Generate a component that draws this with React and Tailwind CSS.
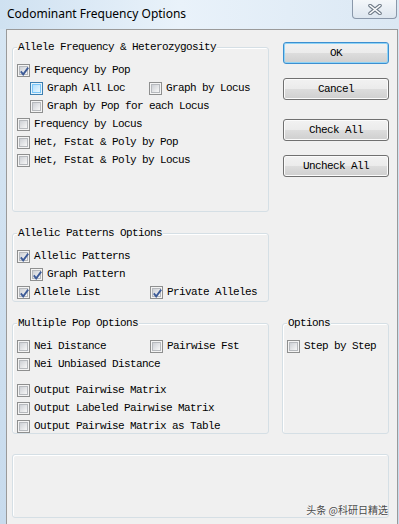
import React from "react";

const Box = ({ checked, hover }) => (
  <span
    className={`relative flex size-[13px] shrink-0 border p-px ${
      hover ? "border-[#3c7fb1] bg-[#e5f3fb]" : "border-[#8e8f8f] bg-[#f4f4f4]"
    }`}
  >
    <span
      className={`size-full border ${
        hover
          ? "border-[#79c6f9] bg-[linear-gradient(135deg,#b1dffd,#e9f7fe)]"
          : "border-[#b6b9bd] bg-[linear-gradient(135deg,#cdd0d5,#f7f7f7)]"
      }`}
    />
    {checked && (
      <svg className="absolute inset-0" width="13" height="13" viewBox="0 0 13 13">
        <path d="M2.8 6.4 L5.2 9.4 L10.2 2.6" fill="none" stroke="#3d5b97" strokeWidth="1.8" />
      </svg>
    )}
  </span>
);

const Check = ({ label, checked, hover, className = "" }) => (
  <div className={`flex h-[18px] items-center gap-[4px] ${className}`}>
    <Box checked={checked} hover={hover} />
    <span className="whitespace-pre">{label}</span>
  </div>
);

const Group = ({ title, className = "", children }) => (
  <div
    className={`relative rounded-[3px] border border-[#d5dfe5] pl-[4px] pt-[13px] shadow-[inset_1px_1px_0_#ffffff] ${className}`}
  >
    <span className="absolute left-[4px] top-[-7px] bg-[#f0f0f0] px-px leading-[12px]">{title}</span>
    {children}
  </div>
);

const Button = ({ children, primary, className = "" }) => (
  <button
    className={`h-[22px] w-full rounded-[3px] border bg-[linear-gradient(to_bottom,#f2f2f2_0%,#ebebeb_50%,#dddddd_50%,#cfcfcf_100%)] text-center leading-[20px] ${
      primary
        ? "border-[#3c8fd0] shadow-[inset_0_0_0_1px_#8fd3f5]"
        : "border-[#707070] shadow-[inset_0_0_0_1px_#fbfbfb]"
    } ${className}`}
  >
    {children}
  </button>
);

export default function App() {
  return (
    <div className="flex h-[524px] w-[399px] flex-col overflow-hidden bg-[linear-gradient(to_bottom,#d7e6f3,#c8dbed)]">
      {/* Title bar */}
      <div className="flex h-[29px] shrink-0 items-start bg-[linear-gradient(to_right,#cfe1f1,#e9f2fa_45%,#dbe8f4)]">
        <span className="pl-[7px] pt-[6px] text-[12px] leading-[16px] text-black [font-family:'Noto_Sans',sans-serif]">
          Codominant Frequency Options
        </span>
        <div className="ml-auto mr-[2px] flex h-[19px] w-[45px] items-center justify-center rounded-b-[4px] border border-t-0 border-[#8a98aa] bg-[linear-gradient(to_bottom,#f4f7fa,#dde6ef)]">
          <svg width="14" height="11" viewBox="0 0 14 11">
            <path d="M2 1.5 L12 9.5 M12 1.5 L2 9.5" stroke="#6f7b88" strokeWidth="3.6" strokeLinecap="round" />
            <path d="M2 1.5 L12 9.5 M12 1.5 L2 9.5" stroke="#ffffff" strokeWidth="1.6" strokeLinecap="round" />
          </svg>
        </div>
      </div>

      {/* Client area */}
      <div className="ml-[6px] w-[392px] flex-1 border-l border-r border-t border-[#9a9a9a] bg-[#f0f0f0] pl-[5px] text-[11px] tracking-[-0.6px] text-black [font-family:'Liberation_Mono',monospace]">
        <div className="flex items-start">
          <Group title="Allele Frequency & Heterozygosity" className="mt-[17px] h-[165px] w-[257px]">
            <Check label="Frequency by Pop" checked />
            <div className="ml-[13px] flex">
              <Check label="Graph All Loc" hover className="w-[119px]" />
              <Check label="Graph by Locus" />
            </div>
            <Check label="Graph by Pop for each Locus" className="ml-[13px]" />
            <Check label="Frequency by Locus" />
            <Check label="Het, Fstat & Poly by Pop" />
            <Check label="Het, Fstat & Poly by Locus" />
          </Group>

          <div className="ml-[14px] mt-[12px] flex w-[106px] flex-col">
            <Button primary>OK</Button>
            <Button className="mt-[14px]">Cancel</Button>
            <Button className="mt-[19px]">Check All</Button>
            <Button className="mt-[14px]">Uncheck All</Button>
          </div>
        </div>

        <Group title="Allelic Patterns Options" className="mt-[21px] h-[69px] w-[257px]">
          <Check label="Allelic Patterns" checked />
          <Check label="Graph Pattern" checked className="ml-[13px]" />
          <div className="flex">
            <Check label="Allele List" checked className="w-[133px]" />
            <Check label="Private Alleles" checked />
          </div>
        </Group>

        <div className="mt-[21px] flex">
          <Group title="Multiple Pop Options" className="h-[111px] w-[257px]">
            <div className="flex">
              <Check label="Nei Distance" className="w-[133px]" />
              <Check label="Pairwise Fst" />
            </div>
            <Check label="Nei Unbiased Distance" />
            <Check label="Output Pairwise Matrix" className="mt-[8px]" />
            <Check label="Output Labeled Pairwise Matrix" />
            <Check label="Output Pairwise Matrix as Table" />
          </Group>
          <Group title="Options" className="ml-[13px] h-[111px] w-[107px]">
            <Check label="Step by Step" />
          </Group>
        </div>

        <div className="mt-[20px] flex h-[64px] w-[377px] items-end justify-end rounded-[3px] border border-[#d5dfe5] pb-[1px] shadow-[inset_1px_1px_0_#ffffff]">
          <span className="text-[10px] leading-[12px] tracking-normal text-[#4a4a4a] [font-family:'Noto_Sans_CJK_SC',sans-serif] [text-shadow:0_0_2px_#ffffff]">
            头条 @科研日精选
          </span>
        </div>
      </div>
    </div>
  );
}
